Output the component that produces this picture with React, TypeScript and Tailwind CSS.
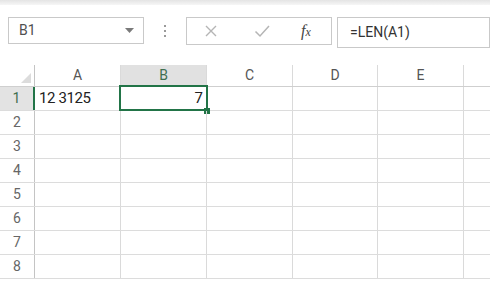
import React from "react";

const cols = ["A", "B", "C", "D", "E", ""];
const widths = ["w-[86px]", "w-[86px]", "w-[86px]", "w-[85px]", "w-[86px]", "w-[26px]"];

export default function App() {
  const rows = [1, 2, 3, 4, 5, 6, 7, 8];
  return (
    <div className="w-[500px] h-[282px] bg-white overflow-hidden text-[#444]" style={{ fontFamily: "Roboto, 'Liberation Sans', sans-serif" }}>
      <div className="h-[5px] w-[490px] bg-gradient-to-b from-[#e4e4e4] to-[#f6f6f6]" />
      {/* toolbar */}
      <div className="flex items-start mt-[12px]">
        <div className="ml-[8px] w-[136px] h-[27px] border border-[#c9c9c9] flex items-center justify-between pl-[10px] pr-[9px]">
          <span className="text-[14px] text-[#505050]">B1</span>
          <svg width="9" height="5" viewBox="0 0 9 5"><path d="M0 0 L9 0 L4.5 5 Z" fill="#7a7a7a" /></svg>
        </div>
        <div className="w-[42px] h-[27px] flex flex-col items-center justify-center gap-[3px]">
          <span className="w-[2px] h-[2px] bg-[#9a9a9a]" />
          <span className="w-[2px] h-[2px] bg-[#9a9a9a]" />
          <span className="w-[2px] h-[2px] bg-[#9a9a9a]" />
        </div>
        <div className="w-[146px] h-[28px] border border-[#c9c9c9] flex items-center">
          <svg className="ml-[17px]" width="14" height="14" viewBox="0 0 14 14"><path d="M2 2 L12 12 M12 2 L2 12" stroke="#b5b5b5" strokeWidth="1.4" /></svg>
          <svg className="ml-[36px]" width="16" height="14" viewBox="0 0 16 14"><path d="M1.5 7.5 L6 12 L15 2" fill="none" stroke="#b5b5b5" strokeWidth="1.5" /></svg>
          <span className="ml-[31px] text-[16px] italic text-[#444] leading-none" style={{ fontFamily: "'Liberation Serif', serif" }}>f<span className="text-[12px]">x</span></span>
        </div>
        <div className="ml-[5px] w-[153px] h-[31px] border border-[#c9c9c9] flex items-center pl-[12px]">
          <span className="text-[14px] text-[#333]">=LEN(A1)</span>
        </div>
      </div>
      {/* grid */}
      <div className="mt-[17px] w-[490px]">
        <div className="flex h-[22px] border-b border-[#cfcfcf]">
          <div className="w-[35px] border-r border-[#c4c4c4] relative">
            <svg className="absolute right-[3px] bottom-[3px]" width="10" height="10" viewBox="0 0 10 10"><path d="M10 0 L10 10 L0 10 Z" fill="#dcdcdc" /></svg>
          </div>
          {cols.map((c, i) => (
            <div key={i} className={`${widths[i]} ${i < 5 ? "border-r border-[#dadada]" : ""} ${c === "B" ? "bg-[#e1e1e1] text-[#3f6f50]" : "text-[#555]"} flex items-center justify-center text-[14px]`}>
              {c}
            </div>
          ))}
        </div>
        {rows.map((r) => (
          <div key={r} className="flex h-[24px] border-b border-[#dcdcdc]">
            <div className={`w-[35px] flex items-center justify-center text-[14px] ${r === 1 ? "bg-[#e3e3e3] border-r-2 border-[#227447] text-[#3f6f50]" : "border-r border-[#c4c4c4] text-[#666]"}`}>
              {r}
            </div>
            {cols.map((c, i) => (
              <div key={i} className={`${widths[i]} ${i < 5 ? "border-r border-[#dadada]" : ""} relative flex items-center text-[15px] text-[#222]`}>
                {r === 1 && i === 0 && <span className="pl-[4px] tracking-[-0.4px]">12 3125</span>}
                {r === 1 && i === 1 && (
                  <>
                    <span className="w-full text-right pr-[3px]">7</span>
                    <div className="absolute left-[-2px] top-[-2px] right-[-2px] bottom-[-1px] border-2 border-[#227447]" />
                    <div className="absolute right-[-4px] bottom-[-4px] w-[6px] h-[6px] bg-[#227447]" />
                  </>
                )}
              </div>
            ))}
          </div>
        ))}
      </div>
    </div>
  );
}
